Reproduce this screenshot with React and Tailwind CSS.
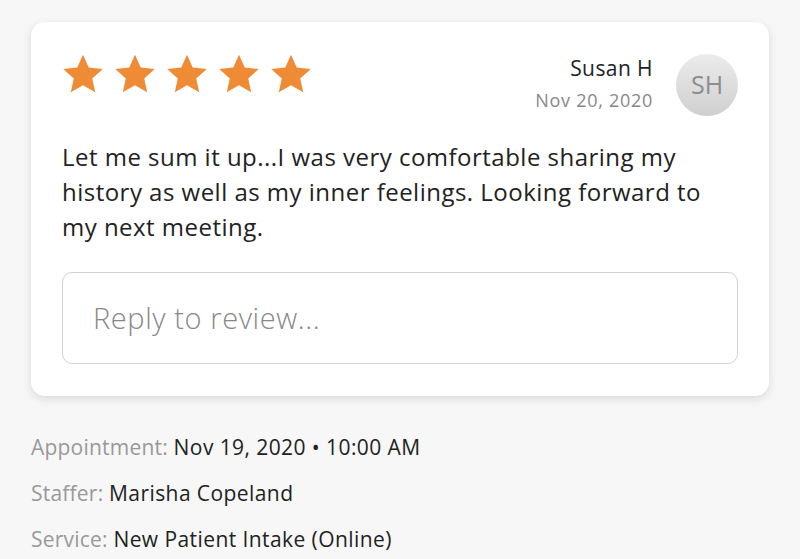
function Star() {
  return (
    <svg viewBox="0 0 24 24" className="w-[46px] h-[46px]">
      <path d="M12 2l3 6.65 7.3.78-5.48 4.9 1.55 7.17L12 17.85 5.63 21.5l1.55-7.17L1.7 9.43l7.3-.78z" fill="#ef8a35" />
    </svg>
  );
}

export default function App() {
  const details = [
    { label: 'Appointment:', value: 'Nov 19, 2020 • 10:00 AM' },
    { label: 'Staffer:', value: 'Marisha Copeland' },
    { label: 'Service:', value: 'New Patient Intake (Online)' },
  ];

  return (
    <div className="min-h-[559px] bg-[#f7f7f7] pt-[22px] px-[31px]" style={{ fontFamily: '"Open Sans", Lato, sans-serif' }}>
      {/* Review card */}
      <div className="bg-white rounded-[14px] shadow-[0_3px_10px_rgba(0,0,0,0.12)] px-[31px] pt-[28px] pb-[32px]">
        <div className="flex items-start justify-between">
          <div className="flex gap-[6px] ml-[-2px] mt-[1px]">
            {[0, 1, 2, 3, 4].map((i) => <Star key={i} />)}
          </div>
          <div className="flex items-center gap-[23px]">
            <div className="text-right">
              <p className="text-[21px] leading-[26px] tracking-[0.02em] text-[#222]">Susan H</p>
              <p className="text-[18px] leading-[24px] tracking-[0.04em] mt-[7px] text-[#888]">Nov 20, 2020</p>
            </div>
            <div className="w-[62px] h-[62px] rounded-full bg-gradient-to-b from-[#ececec] to-[#cfcfcf] flex items-center justify-center mt-[4px]">
              <span className="text-[25px] text-[#8d8d8d]">SH</span>
            </div>
          </div>
        </div>

        <p className="mt-[23px] text-[24px] leading-[35px] tracking-[0.02em] text-[#222] pr-[30px]">
          Let me sum it up...I was very comfortable sharing my history as well as my inner feelings. Looking forward to my next meeting.
        </p>

        <div className="mt-[28px] h-[92px] border-[1.5px] border-[#d2d2d2] rounded-[10px] flex items-center px-[30px]">
          <span className="text-[29px] font-light tracking-[0.02em] text-[#888]">Reply to review...</span>
        </div>
      </div>

      {/* Appointment details */}
      <div className="mt-[38px] flex flex-col gap-[19px]">
        {details.map((d, i) => (
          <p key={i} className="text-[21px] leading-[27px] tracking-[0.01em]">
            <span className="text-[#999]">{d.label}</span>{' '}
            <span className="text-[#222] tracking-[0.02em]">{d.value}</span>
          </p>
        ))}
      </div>
    </div>
  );
}
